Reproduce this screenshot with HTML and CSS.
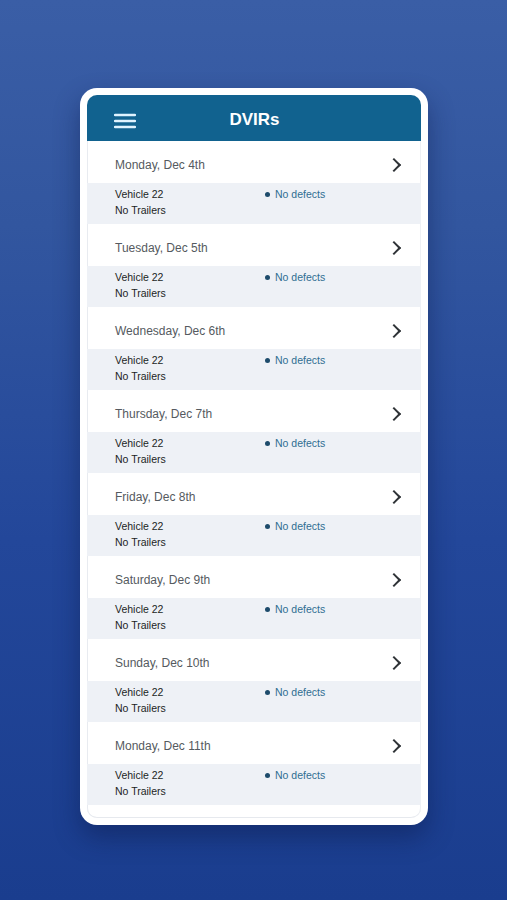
FILE: index.html
```html
<!DOCTYPE html>
<html>

<head>
    <title>DVIRs</title>
    <link rel="stylesheet" href="styles.css">
</head>

<body>

    <div class="phone">
        <div class="screen">
            <div class="header">
                <svg class="menu" width="22" height="16" viewBox="0 0 22 16">
                    <path d="M1 2h20M1 8h20M1 14h20" stroke="#dff3ff" stroke-width="2.4" stroke-linecap="round" />
                </svg>
                <span class="title">DVIRs</span>
            </div>

            <div class="list">
                <div class="item">
                    <div class="day"><span>Monday, Dec 4th</span><span class="chevron"></span></div>
                    <div class="detail">
                        <div class="vehicle">Vehicle 22<br>No Trailers</div>
                        <div class="status"><span class="dot"></span>No defects</div>
                    </div>
                </div>
                <div class="item">
                    <div class="day"><span>Tuesday, Dec 5th</span><span class="chevron"></span></div>
                    <div class="detail">
                        <div class="vehicle">Vehicle 22<br>No Trailers</div>
                        <div class="status"><span class="dot"></span>No defects</div>
                    </div>
                </div>
                <div class="item">
                    <div class="day"><span>Wednesday, Dec 6th</span><span class="chevron"></span></div>
                    <div class="detail">
                        <div class="vehicle">Vehicle 22<br>No Trailers</div>
                        <div class="status"><span class="dot"></span>No defects</div>
                    </div>
                </div>
                <div class="item">
                    <div class="day"><span>Thursday, Dec 7th</span><span class="chevron"></span></div>
                    <div class="detail">
                        <div class="vehicle">Vehicle 22<br>No Trailers</div>
                        <div class="status"><span class="dot"></span>No defects</div>
                    </div>
                </div>
                <div class="item">
                    <div class="day"><span>Friday, Dec 8th</span><span class="chevron"></span></div>
                    <div class="detail">
                        <div class="vehicle">Vehicle 22<br>No Trailers</div>
                        <div class="status"><span class="dot"></span>No defects</div>
                    </div>
                </div>
                <div class="item">
                    <div class="day"><span>Saturday, Dec 9th</span><span class="chevron"></span></div>
                    <div class="detail">
                        <div class="vehicle">Vehicle 22<br>No Trailers</div>
                        <div class="status"><span class="dot"></span>No defects</div>
                    </div>
                </div>
                <div class="item">
                    <div class="day"><span>Sunday, Dec 10th</span><span class="chevron"></span></div>
                    <div class="detail">
                        <div class="vehicle">Vehicle 22<br>No Trailers</div>
                        <div class="status"><span class="dot"></span>No defects</div>
                    </div>
                </div>
                <div class="item">
                    <div class="day"><span>Monday, Dec 11th</span><span class="chevron"></span></div>
                    <div class="detail">
                        <div class="vehicle">Vehicle 22<br>No Trailers</div>
                        <div class="status"><span class="dot"></span>No defects</div>
                    </div>
                </div>
            </div>
        </div>
    </div>

</body>

</html>
```

FILE: styles.css
```css
html,
body {
    height: 100%;
}

body {
    margin: 0;
    font-family: 'Liberation Sans', Arial, sans-serif;
    background: linear-gradient(180deg, #3a5ea6 0%, #32569f 25%, #23479a 60%, #1a3d8e 100%);
    display: flex;
    justify-content: center;
    align-items: flex-start;
    overflow: hidden;
}

.phone {
    margin-top: 88px;
    margin-left: 1px;
    width: 334px;
    height: 723px;
    padding: 7px;
    background: #ffffff;
    border-radius: 17px;
    box-shadow: 0 12px 26px rgba(10, 25, 70, 0.45);
}

.screen {
    height: 100%;
    display: flex;
    flex-direction: column;
    border-radius: 10px;
    overflow: hidden;
    background: #ffffff;
    box-shadow: inset 1px 0 0 #e8ebf0, inset -1px 0 0 #eef0f4, inset 0 -1px 0 #e6e9ee;
}

.header {
    height: 46px;
    flex-shrink: 0;
    box-sizing: border-box;
    padding-top: 4px;
    background-color: #11628f;
    display: flex;
    align-items: center;
    justify-content: center;
    position: relative;
}

.menu {
    position: absolute;
    left: 27px;
    top: 18px;
}

.title {
    color: #ffffff;
    font-size: 17px;
    font-weight: bold;
    margin-left: 1px;
}

.item {
    display: flex;
    flex-direction: column;
}

.day {
    height: 42px;
    box-sizing: border-box;
    padding: 5px 22px 0 28px;
    display: flex;
    align-items: center;
    justify-content: space-between;
    font-size: 12px;
    color: #555a60;
}

.chevron {
    width: 8px;
    height: 8px;
    border-right: 2px solid #2e3236;
    border-bottom: 2px solid #2e3236;
    transform: rotate(-45deg);
}

.detail {
    height: 41px;
    box-sizing: border-box;
    padding: 3px 0 0 28px;
    background-color: #eef1f6;
    display: flex;
    font-size: 10.5px;
    line-height: 16px;
    color: #1c1f24;
}

.vehicle {
    width: 150px;
}

.status {
    display: flex;
    align-items: center;
    height: 16px;
    color: #2f6e92;
}

.dot {
    width: 5px;
    height: 5px;
    border-radius: 50%;
    background-color: #1d4b6b;
    margin-right: 5px;
}
```
